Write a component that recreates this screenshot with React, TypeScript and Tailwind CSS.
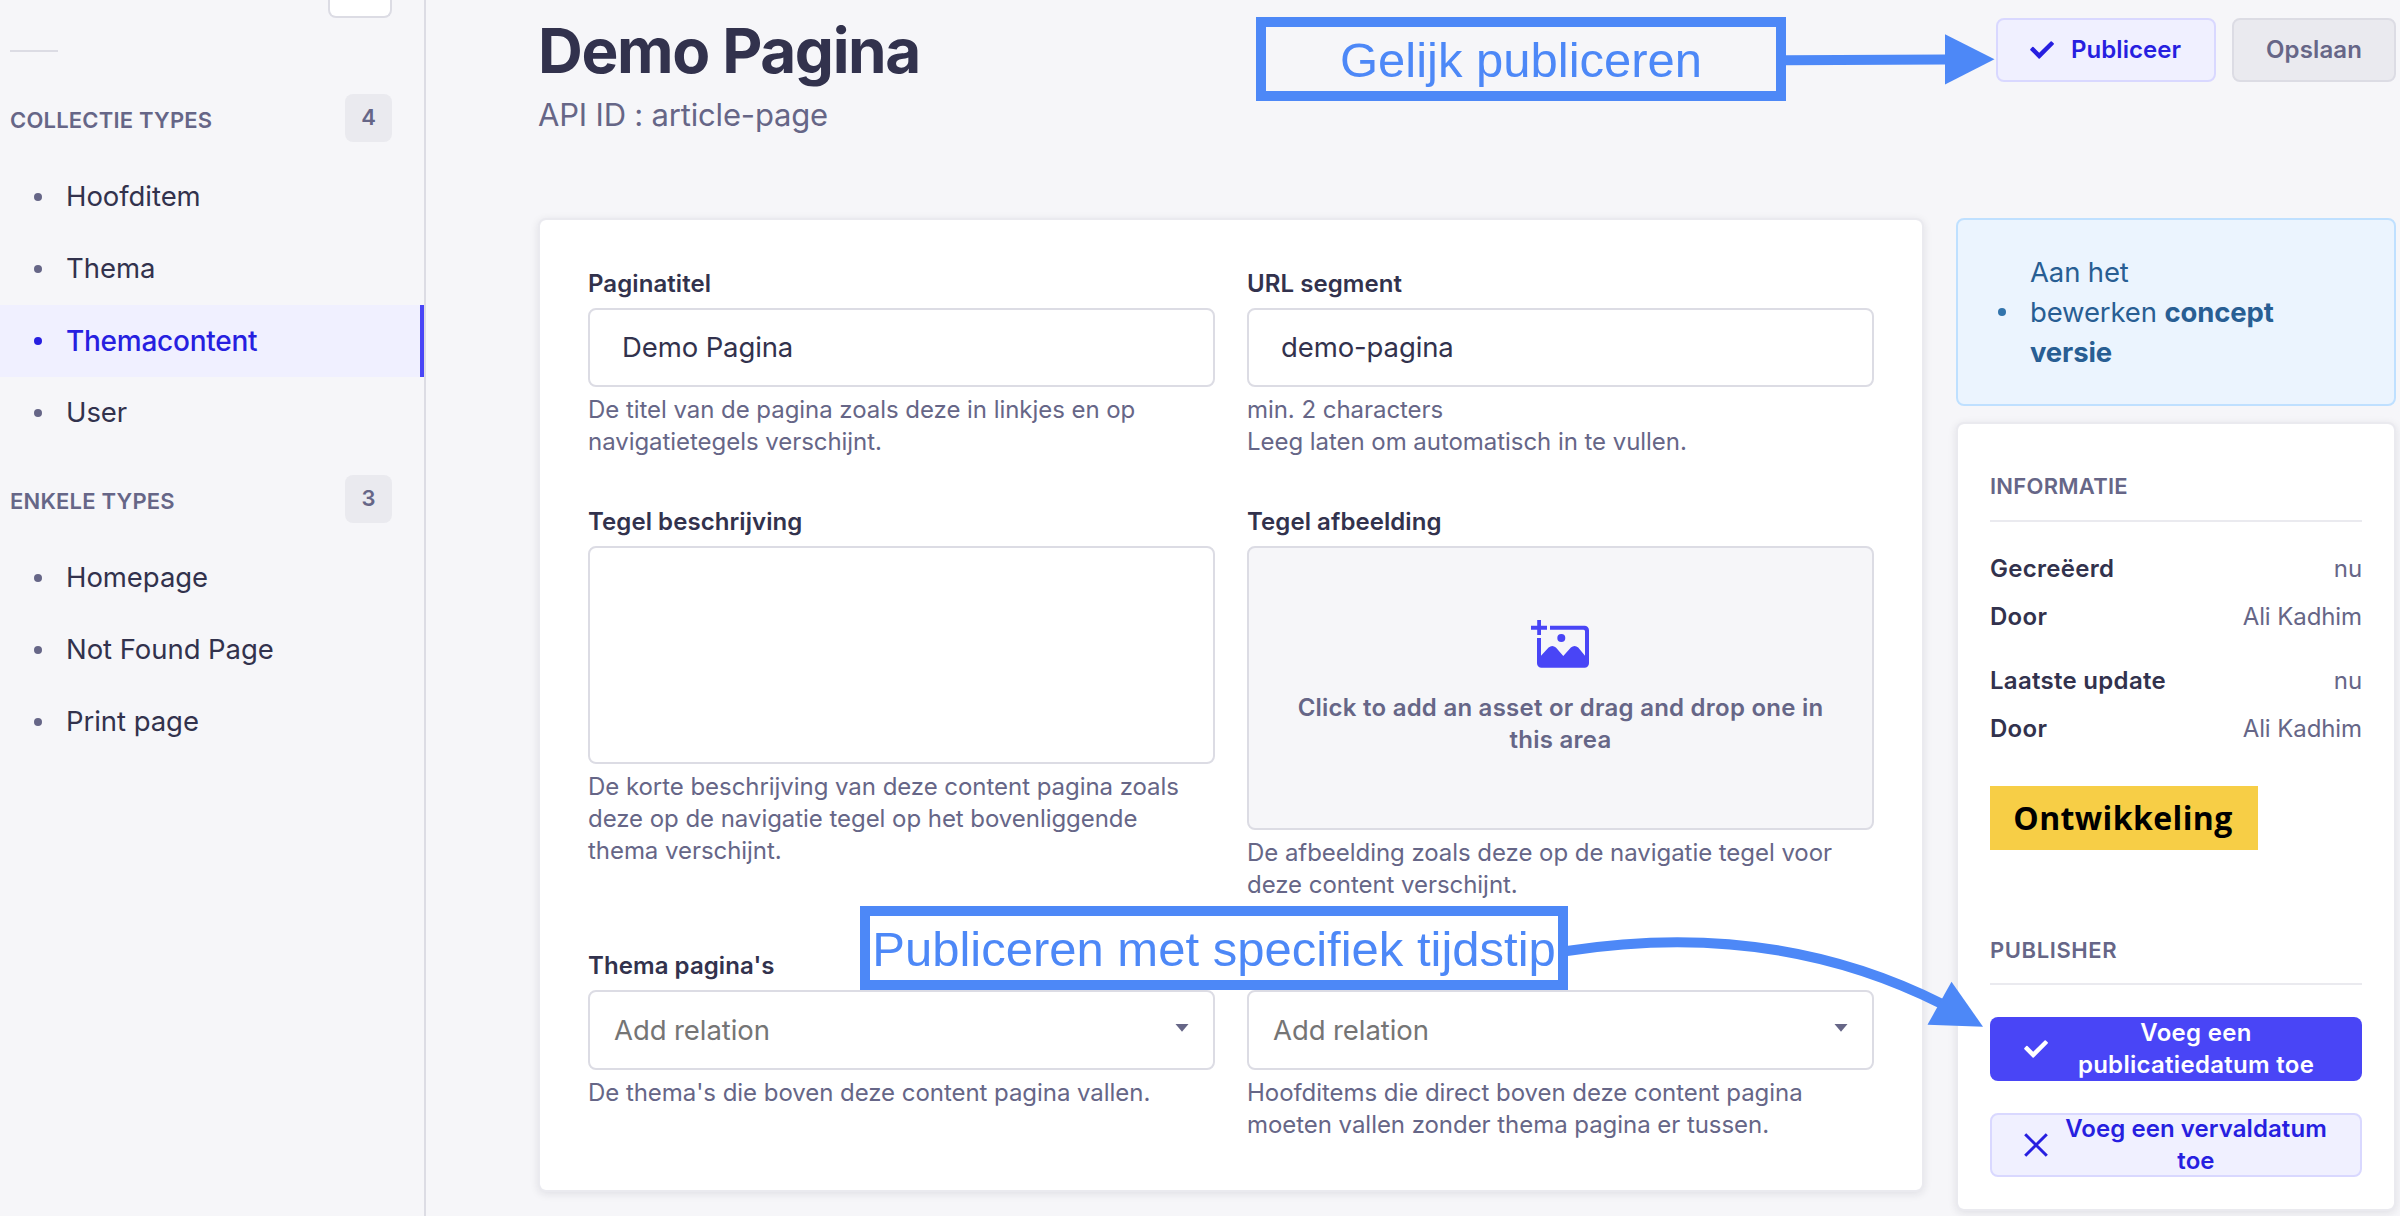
import type { ReactNode } from "react";

const collectionTypes = ["Hoofditem", "Thema", "Themacontent", "User"];
const singleTypes = ["Homepage", "Not Found Page", "Print page"];

function NavSection({ title, items, active }: { title: string; items: string[]; active?: string }) {
  return (
    <section>
      <div className="flex h-12 items-center justify-between pr-8 pl-2.5">
        <h2 className="pt-1 text-[22px] leading-8 font-semibold tracking-[0.009em] text-[#666687] uppercase">{title}</h2>
        <span className="flex h-12 w-[47px] items-center justify-center rounded-lg bg-[#eaeaef] pb-0.5 text-[22px] font-semibold text-[#666687]">
          {items.length}
        </span>
      </div>
      <ul className="mt-[19px]">
        {items.map((item) =>
          item === active ? (
            <li
              key={item}
              className="flex h-[72px] items-center border-r-4 border-[#4945f6] bg-[#f0f0ff] pl-[34px] text-[28px] font-medium tracking-[-0.009em] text-[#271fe0]"
            >
              <span className="mr-6 size-2 rounded-full bg-[#271fe0]" />
              {item}
            </li>
          ) : (
            <li key={item} className="flex h-[72px] items-center pl-[34px] text-[27.5px] tracking-[-0.002em] text-[#32324d]">
              <span className="mr-6 size-2 rounded-full bg-[#666687]" />
              {item}
            </li>
          ),
        )}
      </ul>
    </section>
  );
}

function CheckIcon() {
  return (
    <svg width="24" height="18" viewBox="0 0 24 18" fill="currentColor" className="shrink-0">
      <path d="M20.6.4a.9.9 0 0 1 1.2 0l1.9 1.8a.9.9 0 0 1 0 1.2L9.8 17.5a.9.9 0 0 1-1.2 0L.4 9.2a.9.9 0 0 1 0-1.2l1.900-1.900a.9.9 0 0 1 1.200 0l5.700 5.700z" />
    </svg>
  );
}

function CrossIcon() {
  return (
    <svg width="24" height="24" viewBox="0 0 24 24" fill="none" stroke="currentColor" strokeWidth="3" className="shrink-0">
      <path d="M1.2 1.2 22.8 22.8M22.8 1.2 1.2 22.8" />
    </svg>
  );
}

function AddPictureIcon() {
  return (
    <svg width="58" height="48" viewBox="0 0 58 48" fill="#4945f6" className="mr-0.5">
      <path d="M6.2 0h3.8v5.7h6v4h-6V15H6.2V9.7H0v-4h6.2z" />
      <path d="M19 5.7h34.5a4.5 4.5 0 0 1 4.5 4.5v33a4.500 4.500 0 0 1-4.500 4.500h-43A4.500 4.500 0 0 1 6 43.200V18h4v17.700l7.600-8.200q3.700-3.200 7.300 0L32.300 36l7.600-8.500q3.700-3.200 7.300 0L54 35.700V11.200q0-1.500-1.500-1.500H19z" />
      <circle cx="30.3" cy="18" r="4" />
    </svg>
  );
}

function Field({ label, hint, children }: { label: string; hint: ReactNode; children: ReactNode }) {
  return (
    <div>
      <div className="h-8 text-2xl leading-[31px] font-semibold tracking-[0.003em] text-[#32324d]">{label}</div>
      <div className="mt-2">{children}</div>
      <p className="mt-[7px] pb-px text-2xl leading-[31.9px] tracking-[-0.002em] text-[#666687]">{hint}</p>
    </div>
  );
}

function TextInput({ value }: { value: string }) {
  return (
    <div className="flex h-[79px] items-center rounded-lg border-2 border-[#dcdce4] bg-white pl-8 text-[27.5px] tracking-[-0.004em] text-[#32324d]">
      {value}
    </div>
  );
}

function RelationSelect() {
  return (
    <div className="flex h-20 items-center justify-between rounded-lg border-2 border-[#dcdce4] bg-white px-6 text-[27.5px] tracking-[-0.003em] text-[#757575]">
      <span className="pt-0.5">Add relation</span>
      <svg width="14" height="8" viewBox="0 0 14 8" className="mb-1" fill="#666687">
        <path d="M.5 0h13L7 7.8z" />
      </svg>
    </div>
  );
}

function InfoRow({ label, value }: { label: string; value: string }) {
  return (
    <div className="flex h-8 items-start justify-between text-2xl leading-[30px]">
      <span className="font-semibold tracking-[0.012em] text-[#32324d]">{label}</span>
      <span className="tracking-[-0.004em] text-[#666687]">{value}</span>
    </div>
  );
}

const card = "rounded-lg border-2 border-[#eaeaef] bg-white bg-clip-padding shadow-[0_2px_8px_rgba(33,33,52,0.1)]";

export default function App() {
  return (
    <div className="relative flex h-[1216px] w-[2400px] overflow-hidden bg-[#f6f6f9] font-['Inter',sans-serif]">
      <aside className="w-[426px] shrink-0 border-r-2 border-[#dcdce4]">
        <div className="mr-8 ml-auto h-[18px] w-16 rounded-b-lg border-2 border-t-0 border-[#dcdce4] bg-white" />
        <div className="mt-8 ml-2.5 h-0.5 w-12 bg-[#dcdce4]" />
        <div className="mt-[42px] flex flex-col gap-[26px]">
          <NavSection title="Collectie types" items={collectionTypes} active="Themacontent" />
          <NavSection title="Enkele types" items={singleTypes} />
        </div>
      </aside>

      <main className="flex-1 pr-1 pl-28">
        <header className="flex h-[218px] justify-between">
          <div className="pt-[11px]">
            <h1 className="text-[62px] leading-[80px] font-bold tracking-[-0.022em] text-[#32324d]">Demo Pagina</h1>
            <p className="text-[31px] leading-[48px] tracking-[-0.006em] text-[#666687]">API ID : article-page</p>
          </div>
          <div className="mt-[18px] flex h-16 gap-4 text-2xl font-semibold">
            <button className="flex w-[220px] items-center rounded-lg border-2 border-[#d9d8ff] bg-[#f0f0ff] pl-8 text-[#271fe0]">
              <CheckIcon />
              <span className="ml-[17px] tracking-[0.002em]">Publiceer</span>
            </button>
            <button className="w-[164px] rounded-lg border-2 border-[#dcdce4] bg-[#eaeaef] tracking-[0.006em] text-[#666687]">
              Opslaan
            </button>
          </div>
        </header>

        <div className="flex items-start gap-8">
          <div className={`${card} h-[974px] w-[1386px] px-12 pt-12`}>
            <div className="grid grid-cols-2 gap-x-8 gap-y-[47.5px]">
              <Field
                label="Paginatitel"
                hint={
                  <>
                    De titel van de pagina zoals deze in linkjes en op
                    <br />
                    navigatietegels verschijnt.
                  </>
                }
              >
                <TextInput value="Demo Pagina" />
              </Field>
              <Field
                label="URL segment"
                hint={
                  <>
                    min. 2 characters
                    <br />
                    Leeg laten om automatisch in te vullen.
                  </>
                }
              >
                <TextInput value="demo-pagina" />
              </Field>
              <Field
                label="Tegel beschrijving"
                hint={
                  <>
                    De korte beschrijving van deze content pagina zoals
                    <br />
                    deze op de navigatie tegel op het bovenliggende
                    <br />
                    thema verschijnt.
                  </>
                }
              >
                <div className="h-[218px] rounded-lg border-2 border-[#dcdce4] bg-white" />
              </Field>
              <Field
                label="Tegel afbeelding"
                hint={
                  <>
                    De afbeelding zoals deze op de navigatie tegel voor
                    <br />
                    deze content verschijnt.
                  </>
                }
              >
                <div className="flex h-[284px] flex-col items-center justify-center gap-6 rounded-lg border-2 border-[#dcdce4] bg-[#f6f6f9]">
                  <AddPictureIcon />
                  <p className="text-center text-2xl leading-8 font-semibold tracking-[0.010em] text-[#666687]">
                    Click to add an asset or drag and drop one in
                    <br />
                    this area
                  </p>
                </div>
              </Field>
              <Field label="Thema pagina's" hint="De thema's die boven deze content pagina vallen.">
                <RelationSelect />
              </Field>
              <Field
                label=""
                hint={
                  <>
                    Hoofditems die direct boven deze content pagina
                    <br />
                    moeten vallen zonder thema pagina er tussen.
                  </>
                }
              >
                <RelationSelect />
              </Field>
            </div>
          </div>

          <aside className="flex w-[440px] flex-col gap-4">
            <div className="flex h-[188px] items-center rounded-lg border-2 border-[#bfe0ff] bg-[#ebf4fe] pl-10 text-[27.5px] leading-10 tracking-[-0.005em] text-[#285e93]">
              <span className="mr-6 size-2 rounded-full bg-[#3274ac]" />
              <p>
                Aan het
                <br />
                bewerken <b className="font-bold">concept</b>
                <br />
                <b className="font-bold">versie</b>
              </p>
            </div>

            <div className={`${card} h-[789px] px-8 pt-[46px]`}>
              <h2 className="h-8 text-[22px] leading-8 font-semibold tracking-[0.012em] text-[#666687]">INFORMATIE</h2>
              <hr className="mt-[18px] border-t-2 border-[#eaeaef]" />
              <div className="mt-8 flex flex-col gap-8">
                <div className="flex flex-col gap-4">
                  <InfoRow label="Gecreëerd" value="nu" />
                  <InfoRow label="Door" value="Ali Kadhim" />
                </div>
                <div className="flex flex-col gap-4">
                  <InfoRow label="Laatste update" value="nu" />
                  <InfoRow label="Door" value="Ali Kadhim" />
                </div>
              </div>
              <div className="mt-10 flex h-16 w-[268px] items-center justify-center bg-[#f7ce46] pr-0.5 font-['Open_Sans',sans-serif] text-[32px] font-bold tracking-[0.012em] text-black">
                Ontwikkeling
              </div>
              <h2 className="mt-[84px] h-8 text-[22px] leading-8 font-semibold tracking-[0.027em] text-[#666687]">PUBLISHER</h2>
              <hr className="mt-[17px] border-t-2 border-[#eaeaef]" />
              <div className="mt-8 flex flex-col gap-8 text-center text-2xl leading-8 font-semibold">
                <button className="flex h-16 items-center gap-4 rounded-lg bg-[#4945f6] px-[34px] text-white">
                  <CheckIcon />
                  <span className="flex-1 tracking-[0.012em]">
                    Voeg een
                    <br />
                    publicatiedatum toe
                  </span>
                </button>
                <button className="flex h-16 items-center gap-4 rounded-lg border-2 border-[#d9d8ff] bg-[#f0f0ff] px-8 text-[#271fe0]">
                  <CrossIcon />
                  <span className="flex-1 tracking-[0.003em]">
                    Voeg een vervaldatum
                    <br />
                    toe
                  </span>
                </button>
              </div>
            </div>
          </aside>
        </div>
      </main>

      {/* Annotations drawn over the page */}
      <div className="absolute top-[17px] left-[1256px] flex h-[84px] w-[530px] items-center justify-center border-10 border-[#4d88f7] pt-[3px] font-['Liberation_Sans',sans-serif] text-[49px] whitespace-nowrap text-[#4d88f7]">
        Gelijk publiceren
      </div>
      <div className="absolute top-[906px] left-[860px] flex h-[84px] w-[708px] items-center justify-center border-10 border-[#4d88f7] bg-white pt-[3px] font-['Liberation_Sans',sans-serif] text-[49px] whitespace-nowrap text-[#4d88f7]">
        Publiceren met specifiek tijdstip
      </div>
      <svg className="pointer-events-none absolute inset-0" width="2400" height="1216" fill="#4d88f7">
        <path d="M1785 60.3 1946 59.5" stroke="#4d88f7" strokeWidth="10" />
        <path d="M1945 34.3 1994.5 59.3 1945 84.5z" />
        <path d="M1567 951Q1773 919 1941 1003.5" fill="none" stroke="#4d88f7" strokeWidth="10" />
        <path d="M1951.5 981.7 1983 1026.7 1927.5 1024.7z" />
      </svg>
    </div>
  );
}
